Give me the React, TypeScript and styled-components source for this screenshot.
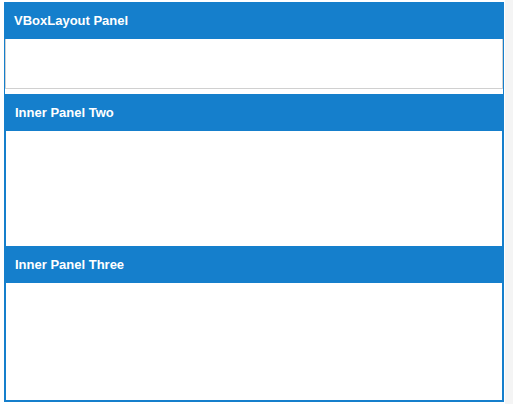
import React from "react";
import styled, { createGlobalStyle } from "styled-components";

const GlobalStyle = createGlobalStyle`
  html, body {
    margin: 0;
    padding: 0;
    background: #ffffff;
  }
  body {
    font-family: "Liberation Sans", Arial, Helvetica, sans-serif;
  }
`;

const Page = styled.div`
  display: flex;
  width: 513px;
  height: 404px;
`;

const Stage = styled.div`
  flex: 1;
  padding: 2px 1px 2px 4px;
`;

const Track = styled.div`
  width: 8px;
  background: #f4f4f4;
`;

const Panel = styled.div`
  width: 500px;
  height: 400px;
  display: flex;
  flex-direction: column;
`;

const Header = styled.div<{ $height: number }>`
  height: ${(p) => p.$height}px;
  flex: none;
  background: #157fcc;
  color: #ffffff;
  font-weight: bold;
  font-size: 13px;
  line-height: 16px;
  padding: 0 10px;
  display: flex;
  align-items: center;
  box-sizing: border-box;
`;

const Body = styled.div`
  flex: 1;
  display: flex;
  flex-direction: column;
  border: 1px solid #157fcc;
  border-top: 0;
  background: #ffffff;
`;

const PlainBox = styled.div`
  height: 50px;
  flex: none;
  margin-bottom: 5px;
  box-sizing: border-box;
  border: 1px solid #d0d0d0;
  border-top: 0;
  background: #ffffff;
`;

const InnerPanel = styled.div<{ $height: number }>`
  height: ${(p) => p.$height}px;
  flex: none;
  display: flex;
  flex-direction: column;
`;

const InnerBody = styled.div<{ $last?: boolean }>`
  flex: 1;
  border: 1px solid #157fcc;
  border-top: 0;
  border-bottom-width: ${(p) => (p.$last ? 1 : 0)}px;
  background: #ffffff;
`;

export default function App() {
  return (
    <>
      <GlobalStyle />
      <Page>
        <Stage>
          <Panel>
            <Header $height={37}>VBoxLayout Panel</Header>
            <Body>
              <PlainBox />
              <InnerPanel $height={152}>
                <Header $height={37}>Inner Panel Two</Header>
                <InnerBody />
              </InnerPanel>
              <InnerPanel $height={155}>
                <Header $height={37}>Inner Panel Three</Header>
                <InnerBody $last />
              </InnerPanel>
            </Body>
          </Panel>
        </Stage>
        <Track />
      </Page>
    </>
  );
}
